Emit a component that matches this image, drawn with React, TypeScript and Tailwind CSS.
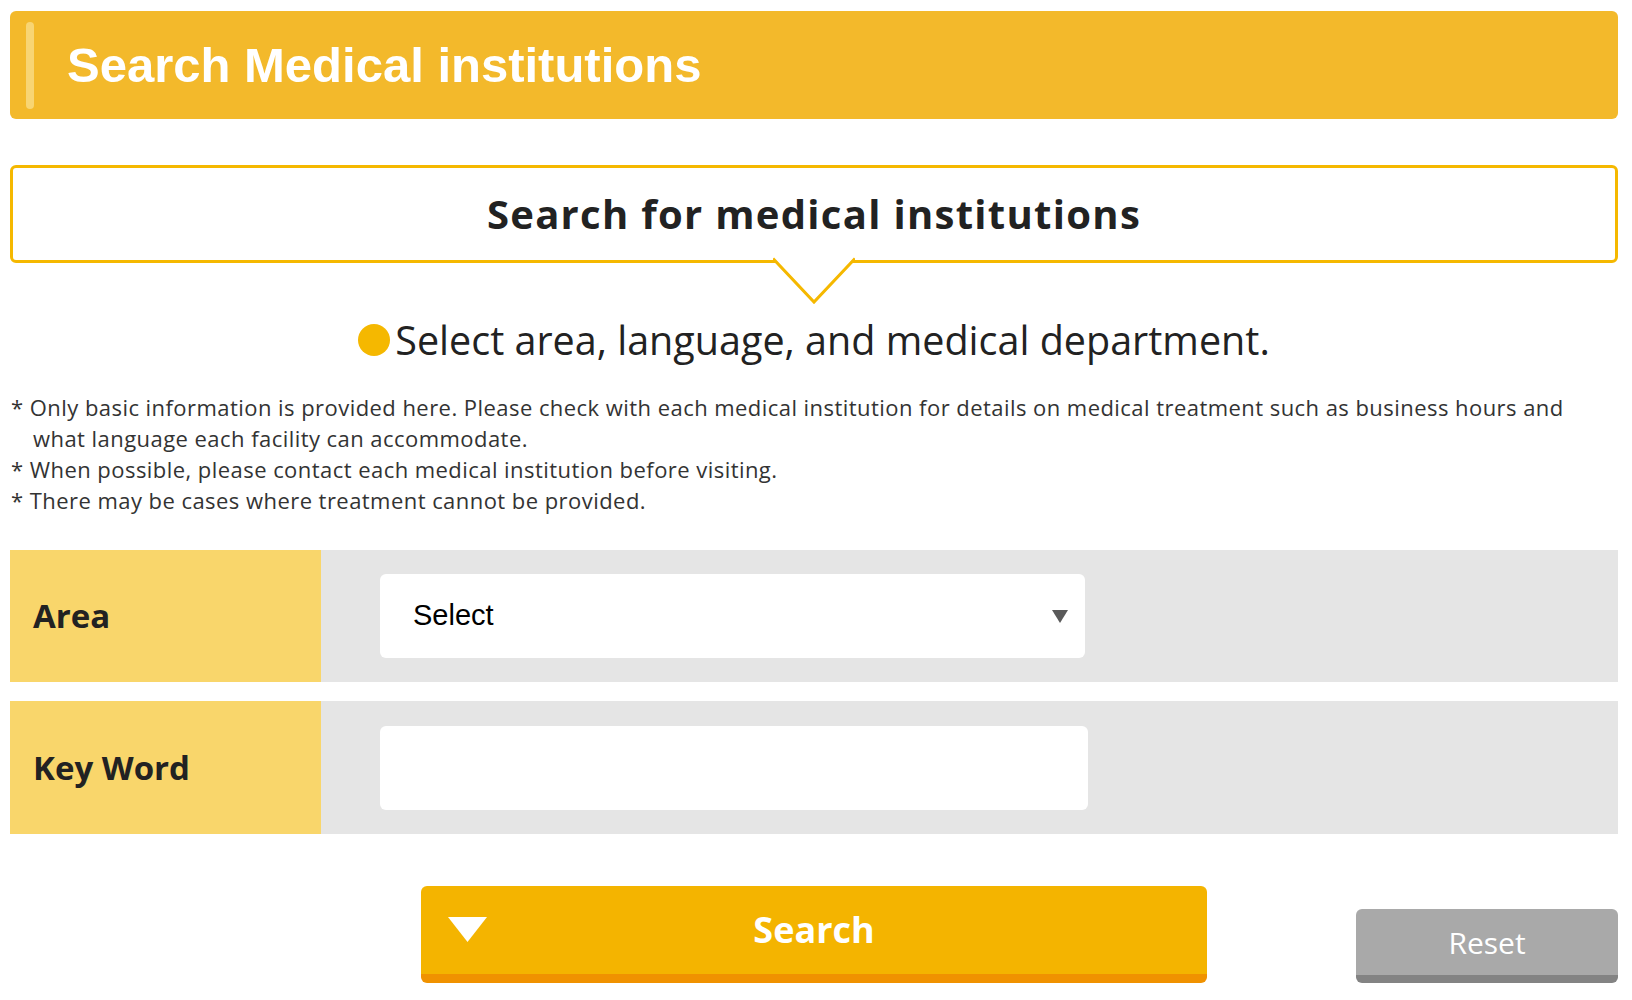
const notes = [
  "Only basic information is provided here. Please check with each medical institution for details on medical treatment such as business hours and",
];

const Notch = () => (
  <svg
    className="absolute left-1/2 -translate-x-1/2 bottom-[-45px]"
    width="82"
    height="48"
    viewBox="0 0 82 48"
  >
    <polygon points="0,0 82,0 41,45" fill="#ffffff" />
    <polyline
      points="0,1.5 41,45 82,1.5"
      fill="none"
      stroke="#f5b800"
      strokeWidth="3"
    />
  </svg>
);

const App = () => {
  return (
    <div className="w-[1632px] min-h-[1000px] bg-white font-['Open_Sans',sans-serif] text-[#333]">
      <div className="w-[1608px] ml-[10px] pt-[11px]">
        {/* page title */}
        <div className="h-[108px] rounded-[6px] bg-[#f3b92b] flex items-center">
          <div className="ml-[16px] w-[8px] h-[87px] rounded-full bg-[#f8d573]" />
          <h1 className="ml-[33px] text-[49px] font-bold text-white font-['Liberation_Sans',Arial,sans-serif] leading-none">
            Search Medical institutions
          </h1>
        </div>

        {/* balloon heading */}
        <div className="relative mt-[46px] h-[98px] border-[3px] border-[#f5b800] rounded-[6px] flex items-center justify-center">
          <h2 className="text-[40px] font-bold tracking-[1.3px] text-[#222] leading-none">
            Search for medical institutions
          </h2>
          <Notch />
        </div>

        <div className="mt-[49px] h-[56px] flex items-center justify-center">
          <span className="w-[32px] h-[32px] rounded-full bg-[#f5b800] mr-[5px]" />
          <p className="text-[39.5px] leading-[56px] text-[#222]">
            Select area, language, and medical department.
          </p>
        </div>

        <div className="mt-[24px] text-[22px] tracking-[0.45px] leading-[31px] text-[#333]">
          <p className="pl-[22px] -indent-[22px] ml-[1px]">
            * {notes[0]}
            <br />
            what language each facility can accommodate.
          </p>
          <p className="ml-[1px]">* When possible, please contact each medical institution before visiting.</p>
          <p className="ml-[1px]">* There may be cases where treatment cannot be provided.</p>
        </div>

        {/* form */}
        <div className="mt-[34px] flex h-[132px] bg-[#e5e5e5]">
          <div className="w-[311px] bg-[#f9d66b] flex items-center pl-[23px] text-[33px] font-bold text-[#222]">
            Area
          </div>
          <div className="ml-[59px] self-center w-[705px] h-[84px] rounded-[6px] bg-white flex items-center justify-between pl-[33px] pr-[17px]">
            <span className="text-[29px] text-black font-['Liberation_Sans',Arial,sans-serif]">Select</span>
            <svg width="16" height="13" viewBox="0 0 16 13">
              <polygon points="0,0 16,0 8,13" fill="#5a5a5a" />
            </svg>
          </div>
        </div>

        <div className="mt-[19px] flex h-[133px] bg-[#e5e5e5]">
          <div className="w-[311px] bg-[#f9d66b] flex items-center pl-[23px] text-[33px] font-bold text-[#222]">
            Key Word
          </div>
          <input
            type="text"
            className="ml-[59px] self-center w-[708px] h-[84px] rounded-[6px] bg-white outline-none px-[20px] text-[28px]"
          />
        </div>

        {/* buttons */}
        <div className="mt-[52px] flex items-end">
          <button className="relative ml-[411px] w-[786px] h-[97px] rounded-[6px] bg-[#f4b400] border-b-[9px] border-[#f09200] flex items-center justify-center text-white text-[36px] font-bold">
            <svg className="absolute left-[27px] top-[31px]" width="39" height="25" viewBox="0 0 39 25">
              <polygon points="0,0 39,0 19.5,25" fill="#ffffff" />
            </svg>
            Search
          </button>
          <button className="ml-auto w-[262px] h-[74px] rounded-[6px] bg-[#a9a9a9] border-b-[8px] border-[#838383] flex items-center justify-center text-white text-[30px]">
            Reset
          </button>
        </div>
      </div>
    </div>
  );
};

export default App;
